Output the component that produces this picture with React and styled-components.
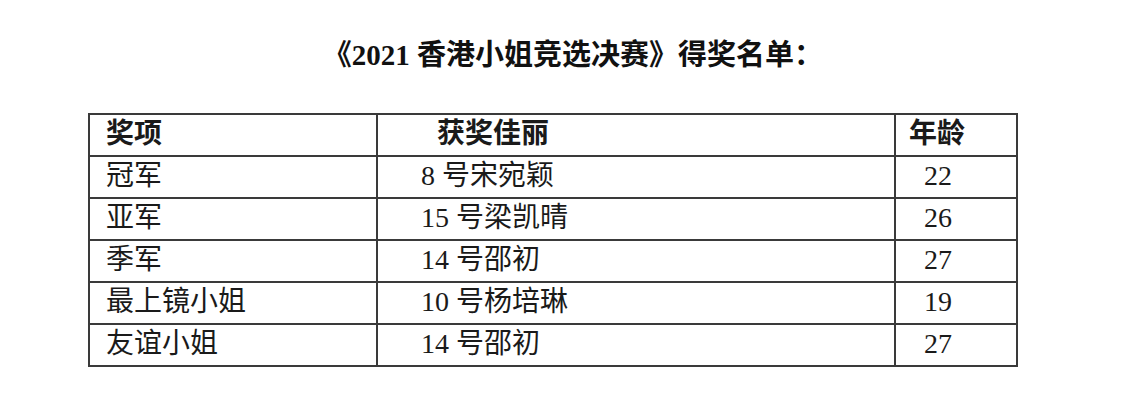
import React from "react";
import styled, { createGlobalStyle } from "styled-components";

const Global = createGlobalStyle`
  html, body { margin: 0; padding: 0; background: #fff; }
  body { font-family: "Liberation Serif", "Noto Sans CJK SC", serif; color: #111; }
`;

const Page = styled.div`
  width: 1146px;
  height: 416px;
  padding: 37px 0 0 88px;
  box-sizing: border-box;
  background: #fff;
`;

const Title = styled.h1`
  margin: 0 0 40px -88px;
  width: 1146px;
  text-align: center;
  font-family: "Liberation Serif", "Noto Sans CJK SC", serif;
  font-weight: 700;
  font-size: 29px;
  line-height: 36px;
  letter-spacing: 0;
  color: #111;
`;

const Table = styled.table`
  border-collapse: collapse;
  table-layout: fixed;
  width: 928px;
`;

const Cell = styled.td`
  border: 2px solid #3a3a3a;
  height: 38px;
  padding: 0 0 2px ${(p) => p.$pad}px;
  font-family: "Liberation Serif", "Noto Sans CJK SC", serif;
  font-size: 28px;
  line-height: 32px;
  font-weight: ${(p) => (p.$head ? 700 : 400)};
  color: #1a1a1a;
  white-space: nowrap;
  vertical-align: middle;
`;

const cols = [288, 518, 122];

const rows = [
  ["冠军", "8 号宋宛颖", "22"],
  ["亚军", "15 号梁凯晴", "26"],
  ["季军", "14 号邵初", "27"],
  ["最上镜小姐", "10 号杨培琳", "19"],
  ["友谊小姐", "14 号邵初", "27"],
];

export default function App() {
  return (
    <>
      <Global />
      <Page>
        <Title>《2021 香港小姐竞选决赛》得奖名单：</Title>
        <Table>
          <colgroup>
            {cols.map((w, i) => (
              <col key={i} style={{ width: w }} />
            ))}
          </colgroup>
          <tbody>
            <tr>
              <Cell $head $pad={16}>奖项</Cell>
              <Cell $head $pad={59}>获奖佳丽</Cell>
              <Cell $head $pad={13}>年龄</Cell>
            </tr>
            {rows.map((r, i) => (
              <tr key={i}>
                <Cell $pad={16}>{r[0]}</Cell>
                <Cell $pad={43}>{r[1]}</Cell>
                <Cell $pad={28}>{r[2]}</Cell>
              </tr>
            ))}
          </tbody>
        </Table>
      </Page>
    </>
  );
}
